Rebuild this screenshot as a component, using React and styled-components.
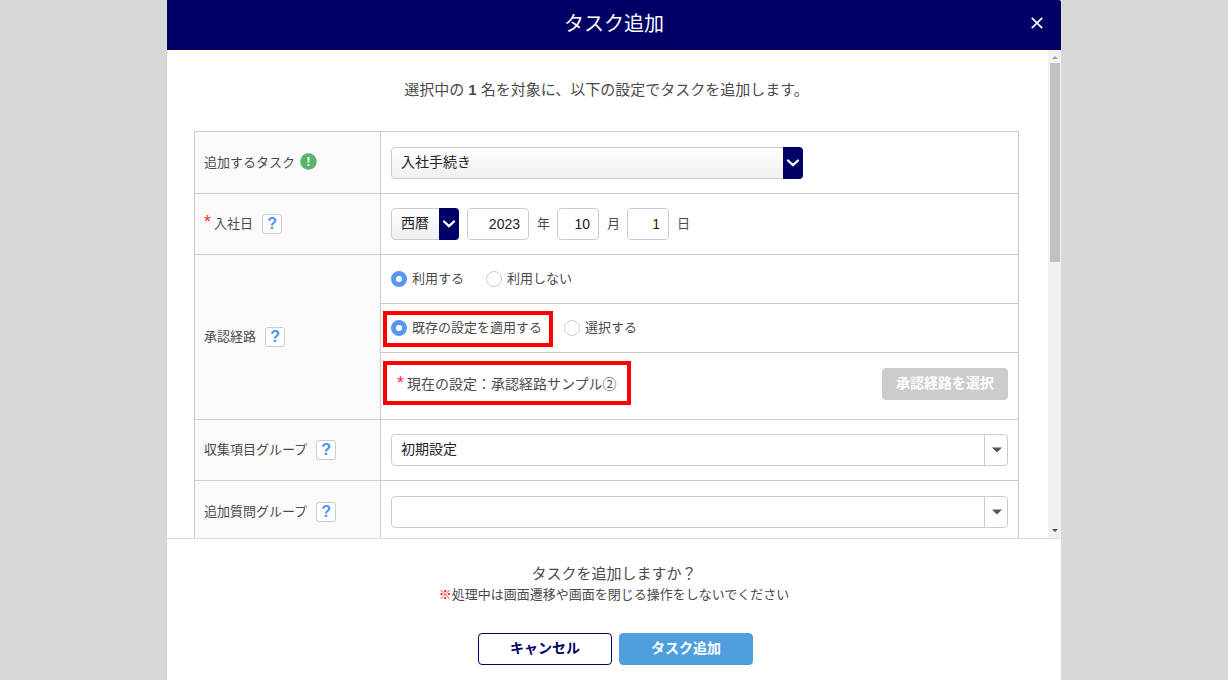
import React from 'react';
import styled, { createGlobalStyle, css } from 'styled-components';

const navy = '#000066';
const line = '#cccccc';

const GlobalStyle = createGlobalStyle`
  *, *::before, *::after { box-sizing: border-box; }
  body {
    margin: 0;
    background: #d8d8d8;
    color: #4a4a4a;
    font: 13px/20px "Liberation Sans", "Noto Sans CJK JP", sans-serif;
  }
  button, input, select { font-family: inherit; margin: 0; }
`;

const Modal = styled.main`
  display: flex;
  flex-direction: column;
  max-width: 894px;
  height: 100vh;
  margin: 0 auto;
  background: #fff;
`;

const Header = styled.header`
  display: grid;
  grid-template-columns: 48px 1fr 48px;
  flex: none;
  height: 50px;
  background: ${navy};
  border-radius: 0 2px 0 0;
  color: #fff;
`;

const Title = styled.h1`
  grid-column: 2;
  margin: 0;
  font-size: 20px;
  line-height: 48px;
  font-weight: 400;
  text-align: center;
`;

const CloseButton = styled.button`
  display: grid;
  place-items: center;
  width: 48px;
  height: 46px;
  padding: 0;
  border: 0;
  background: none;
  color: inherit;
  cursor: pointer;
`;

const Body = styled.div`
  display: flex;
  flex: 1;
  min-height: 0;
`;

const Content = styled.div`
  flex: 1;
  min-width: 0;
  overflow: hidden;
  padding: 28px 29px 0 27px;
`;

const Intro = styled.p`
  margin: 0 0 29px;
  font-size: 15px;
  line-height: 24px;
  text-align: center;
`;

const ScrollTrack = styled.div`
  display: flex;
  flex-direction: column;
  justify-content: space-between;
  flex: none;
  width: 13px;
  padding: 1px 1px 1px 2px;
  background: #f1f1f1;
`;

const ScrollArrow = styled.svg`
  display: block;
  width: 10px;
  height: 12px;
`;

const ScrollThumb = styled.div`
  height: 199px;
  margin-bottom: auto;
  background: #c1c1c1;
`;

const FormTable = styled.table`
  width: 100%;
  border-collapse: collapse;
  table-layout: fixed;
`;

const Row = styled.tr`
  height: ${(p) => p.$height}px;
`;

const HeadCell = styled.th`
  width: 186px;
  padding: 0 9px;
  border: 1px solid ${line};
  background: #fafafa;
  font-weight: 400;
  text-align: left;
`;

const Cell = styled.td`
  padding: ${(p) => (p.$top ? '15px 10px 0' : '0 10px')};
  border: 1px solid ${line};
  vertical-align: ${(p) => (p.$top ? 'top' : 'middle')};
`;

const LabelLine = styled.div`
  display: flex;
  align-items: center;
  gap: ${(p) => p.$gap || 9}px;
`;

const Asterisk = styled.span`
  margin-right: 3px;
  color: #f33;
  font-size: 18px;
  line-height: 16px;
`;

const HelpButton = styled.button`
  width: 20px;
  height: 20px;
  padding: 0;
  border: 1px solid ${line};
  border-radius: 3px;
  background: #fff;
  color: #4a94f5;
  font-size: 16px;
  line-height: 18px;
  font-weight: 700;
  text-align: center;
  cursor: pointer;
`;

const SelectBox = styled.div`
  position: relative;
  width: ${(p) => p.$width || '100%'};
`;

const Select = styled.select`
  display: block;
  appearance: none;
  width: 100%;
  height: 32px;
  padding: 0 24px 2px 9px;
  border: 1px solid ${line};
  border-radius: 4px;
  background: ${(p) => (p.$plain ? '#fff' : 'linear-gradient(#fff, #f0f0f0)')};
  color: #222;
  font-size: 14px;
`;

const SelectArrow = styled.span`
  position: absolute;
  top: 0;
  right: 0;
  display: grid;
  place-items: center;
  height: 32px;
  pointer-events: none;
  ${(p) =>
    p.$plain
      ? css`
          width: 24px;
          border-left: 1px solid ${line};
        `
      : css`
          width: 20px;
          border-radius: 0 4px 4px 0;
          background: ${navy};
        `}
`;

const DateLine = styled.div`
  display: flex;
  align-items: center;
  gap: 8px;
`;

const NumberInput = styled.input`
  width: ${(p) => p.$width}px;
  height: 32px;
  padding: 0 8px 1px;
  border: 1px solid ${line};
  border-radius: 4px;
  background: #fff;
  color: #222;
  font-size: 14px;
  text-align: right;
`;

const Unit = styled.span`
  margin-right: -1px;
`;

const RadioLine = styled.div`
  display: flex;
  gap: 22px;
`;

const RadioLabel = styled.label`
  position: relative;
  display: flex;
  align-items: center;
  gap: 5px;
`;

const Radio = styled.input`
  appearance: none;
  width: 16px;
  height: 16px;
  margin: 0;
  border: 1px solid ${line};
  border-radius: 50%;
  background: #fff;
  &:checked { border: 5px solid #5897f1; }
`;

const Highlight = styled.span`
  position: absolute;
  inset: ${(p) => p.$inset};
  border: 4px solid #f00;
  pointer-events: none;
`;

const RouteLine = styled.div`
  display: flex;
  justify-content: space-between;
`;

const CurrentRoute = styled.div`
  position: relative;
  padding-left: 6px;
  font-size: 14px;
  line-height: 32px;
`;

const Button = styled.button`
  width: ${(p) => p.$width}px;
  height: 32px;
  padding: 0 0 2px;
  border: 1px solid ${(p) => p.$border};
  border-radius: 4px;
  background: ${(p) => p.$bg};
  color: ${(p) => p.$color};
  font-size: 14px;
  line-height: 28px;
  font-weight: 700;
`;

const Footer = styled.footer`
  flex: none;
  padding: 24px 0 15px;
  border-top: 1px solid #ddd;
  text-align: center;
`;

const Question = styled.p`
  margin: 0;
  font-size: 15px;
  line-height: 22px;
`;

const Caution = styled.p`
  margin: 0 0 28px;
`;

const CautionMark = styled.span`
  color: #f00;
  font-weight: 700;
`;

const Actions = styled.div`
  display: flex;
  justify-content: center;
  gap: 7px;
  padding-left: 3px;
`;

function Dropdown({ label, value, width, plain, id }) {
  return (
    <SelectBox $width={width}>
      <Select id={id} aria-label={label} $plain={plain} defaultValue={value}>
        <option value={value}>{value}</option>
      </Select>
      <SelectArrow $plain={plain}>
        {plain ? (
          <svg width="10" height="6" viewBox="0 0 10 6"><path d="M0 0.5h10L5 5.5z" fill="#555" /></svg>
        ) : (
          <svg width="14" height="10" viewBox="0 0 14 10">
            <path d="M2 2.5 7 7.2l5-4.7" fill="none" stroke="#fff" strokeWidth="2.4" strokeLinecap="round" />
          </svg>
        )}
      </SelectArrow>
    </SelectBox>
  );
}

function Help({ topic }) {
  return <HelpButton type="button" aria-label={`${topic} ?`}>?</HelpButton>;
}

export default function App() {
  return (
    <>
      <GlobalStyle />
      <Modal>
        <Header>
          <Title>タスク追加</Title>
          <CloseButton type="button" aria-label="閉じる">
            <svg width="12" height="12" viewBox="0 0 12 12">
              <path d="M0.8 0.8 11.2 11.2M11.2 0.8 0.8 11.2" stroke="#fff" strokeWidth="1.7" />
            </svg>
          </CloseButton>
        </Header>
        <Body>
          <Content>
            <Intro>選択中の <b>1</b> 名を対象に、以下の設定でタスクを追加します。</Intro>
            <FormTable>
              <tbody>
                <Row $height={62}>
                  <HeadCell scope="row">
                    <LabelLine $gap={5}>
                      <label htmlFor="task">追加するタスク</label>
                      <svg width="17" height="20" viewBox="0 0 17 20">
                        <circle cx="8.5" cy="8.5" r="8.3" fill="#58b56b" />
                        <path d="M7.4 4h2.2l-0.4 5.8H7.8z" fill="#fff" />
                        <circle cx="8.5" cy="12" r="1.1" fill="#fff" />
                      </svg>
                    </LabelLine>
                  </HeadCell>
                  <Cell><Dropdown id="task" value="入社手続き" width="412px" /></Cell>
                </Row>
                <Row $height={61}>
                  <HeadCell scope="row">
                    <LabelLine>
                      <span><Asterisk>*</Asterisk>入社日</span>
                      <Help topic="入社日" />
                    </LabelLine>
                  </HeadCell>
                  <Cell>
                    <DateLine>
                      <Dropdown label="暦" value="西暦" width="68px" />
                      <NumberInput id="year" $width={62} defaultValue="2023" />
                      <Unit as="label" htmlFor="year">年</Unit>
                      <NumberInput id="month" $width={42} defaultValue="10" />
                      <Unit as="label" htmlFor="month">月</Unit>
                      <NumberInput id="day" $width={42} defaultValue="1" />
                      <Unit as="label" htmlFor="day">日</Unit>
                    </DateLine>
                  </Cell>
                </Row>
                <Row $height={49}>
                  <HeadCell scope="rowgroup" rowSpan={3}>
                    <LabelLine>
                      <span>承認経路</span>
                      <Help topic="承認経路" />
                    </LabelLine>
                  </HeadCell>
                  <Cell>
                    <RadioLine>
                      <RadioLabel><Radio type="radio" name="use" defaultChecked />利用する</RadioLabel>
                      <RadioLabel><Radio type="radio" name="use" />利用しない</RadioLabel>
                    </RadioLine>
                  </Cell>
                </Row>
                <Row $height={49}>
                  <Cell>
                    <RadioLine>
                      <RadioLabel>
                        <Radio type="radio" name="route" defaultChecked />既存の設定を適用する
                        <Highlight $inset="-7px -11px -9px -8px" />
                      </RadioLabel>
                      <RadioLabel><Radio type="radio" name="route" />選択する</RadioLabel>
                    </RadioLine>
                  </Cell>
                </Row>
                <Row $height={67}>
                  <Cell $top>
                    <RouteLine>
                      <CurrentRoute>
                        <Asterisk>*</Asterisk>現在の設定：承認経路サンプル②
                        <Highlight $inset="-7px -14px -5px -8px" />
                      </CurrentRoute>
                      <Button type="button" disabled $width={126} $bg="#cccccc" $border="#cccccc" $color="#fff">
                        承認経路を選択
                      </Button>
                    </RouteLine>
                  </Cell>
                </Row>
                <Row $height={61}>
                  <HeadCell scope="row">
                    <LabelLine>
                      <label htmlFor="items">収集項目グループ</label>
                      <Help topic="収集項目グループ" />
                    </LabelLine>
                  </HeadCell>
                  <Cell><Dropdown id="items" value="初期設定" plain /></Cell>
                </Row>
                <Row $height={62}>
                  <HeadCell scope="row">
                    <LabelLine>
                      <label htmlFor="questions">追加質問グループ</label>
                      <Help topic="追加質問グループ" />
                    </LabelLine>
                  </HeadCell>
                  <Cell><Dropdown id="questions" value="" plain /></Cell>
                </Row>
              </tbody>
            </FormTable>
          </Content>
          <ScrollTrack aria-hidden="true">
            <ScrollArrow viewBox="0 0 10 12"><path d="M2 8h6L5 5z" fill="#a0a0a0" /></ScrollArrow>
            <ScrollThumb />
            <ScrollArrow viewBox="0 0 10 12"><path d="M2 4h6L5 7z" fill="#505050" /></ScrollArrow>
          </ScrollTrack>
        </Body>
        <Footer>
          <Question>タスクを追加しますか？</Question>
          <Caution><CautionMark>※</CautionMark>処理中は画面遷移や画面を閉じる操作をしないでください</Caution>
          <Actions>
            <Button type="button" $width={134} $bg="#fff" $border={navy} $color={navy}>キャンセル</Button>
            <Button type="button" $width={134} $bg="#4f9fdf" $border="#4f9fdf" $color="#fff">タスク追加</Button>
          </Actions>
        </Footer>
      </Modal>
    </>
  );
}
